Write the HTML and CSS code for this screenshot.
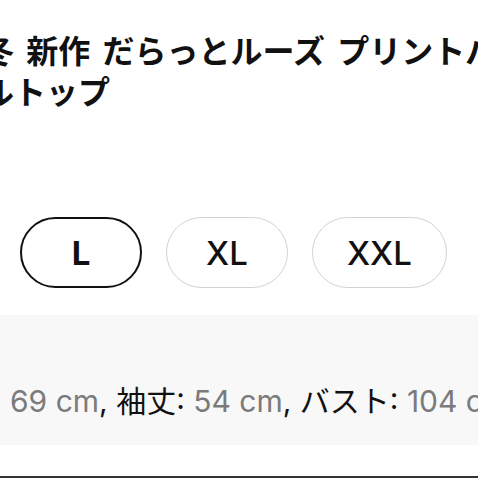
FILE: index.html
```html
<!DOCTYPE html>
<html lang="ja">
<head>
    <meta charset="UTF-8">
    <meta name="viewport" content="width=device-width, initial-scale=1.0">
    <title>商品詳細</title>
    <link rel="stylesheet" href="styles.css">
</head>
<body>
    <div class="page">
        <h1 class="title">
            <span class="title-line">冬 新作 だらっとルーズ プリントパ</span>
            <span class="title-line">ルトップ</span>
        </h1>

        <div class="sizes">
            <button class="size selected">L</button>
            <button class="size">XL</button>
            <button class="size">XXL</button>
        </div>

        <div class="spec">
            <p class="spec-text"><span class="value">69 cm</span>, 袖丈: <span class="value">54 cm</span>, バスト: <span class="value">104 cm</span></p>
        </div>

        <div class="rule"></div>
    </div>
</body>
</html>
```

FILE: styles.css
```css
html, body {
    margin: 0;
    padding: 0;
    background: #fff;
}
body {
    width: 478px;
    height: 478px;
    overflow: hidden;
    font-family: Inter, "Noto Sans CJK JP", sans-serif;
    color: #111;
}
.page {
    width: 478px;
    height: 478px;
    display: flex;
    flex-direction: column;
}
.title {
    margin: 0 0 0 -18px;
    padding-top: 29px;
    font-family: "Noto Sans CJK JP", sans-serif;
    font-size: 32px;
    font-weight: 700;
    line-height: 41px;
    word-spacing: 5px;
    white-space: nowrap;
    color: #111;
}
.title-line {
    display: block;
}
.sizes {
    display: flex;
    gap: 24px;
    padding-left: 20px;
    margin-top: 106px;
}
.size {
    box-sizing: border-box;
    height: 71px;
    min-width: 122px;
    padding: 0 34px;
    border: 1.5px solid #d2d2d2;
    border-radius: 36px;
    background: #fff;
    font-family: Inter, "Liberation Sans", sans-serif;
    font-size: 33px;
    font-weight: 500;
    color: #111;
    flex-shrink: 0;
}
.size.selected {
    border: 2px solid #111;
    font-weight: 700;
}
.spec {
    margin-top: 27px;
    height: 130px;
    background: #f8f8f8;
    overflow: hidden;
}
.spec-text {
    margin: 0;
    padding: 68px 0 0 10px;
    font-size: 30px;
    line-height: 36px;
    white-space: nowrap;
    color: #111;
}
.value {
    color: #7b7b7b;
}
.rule {
    margin-top: auto;
    height: 2px;
    background: #333;
}
```
